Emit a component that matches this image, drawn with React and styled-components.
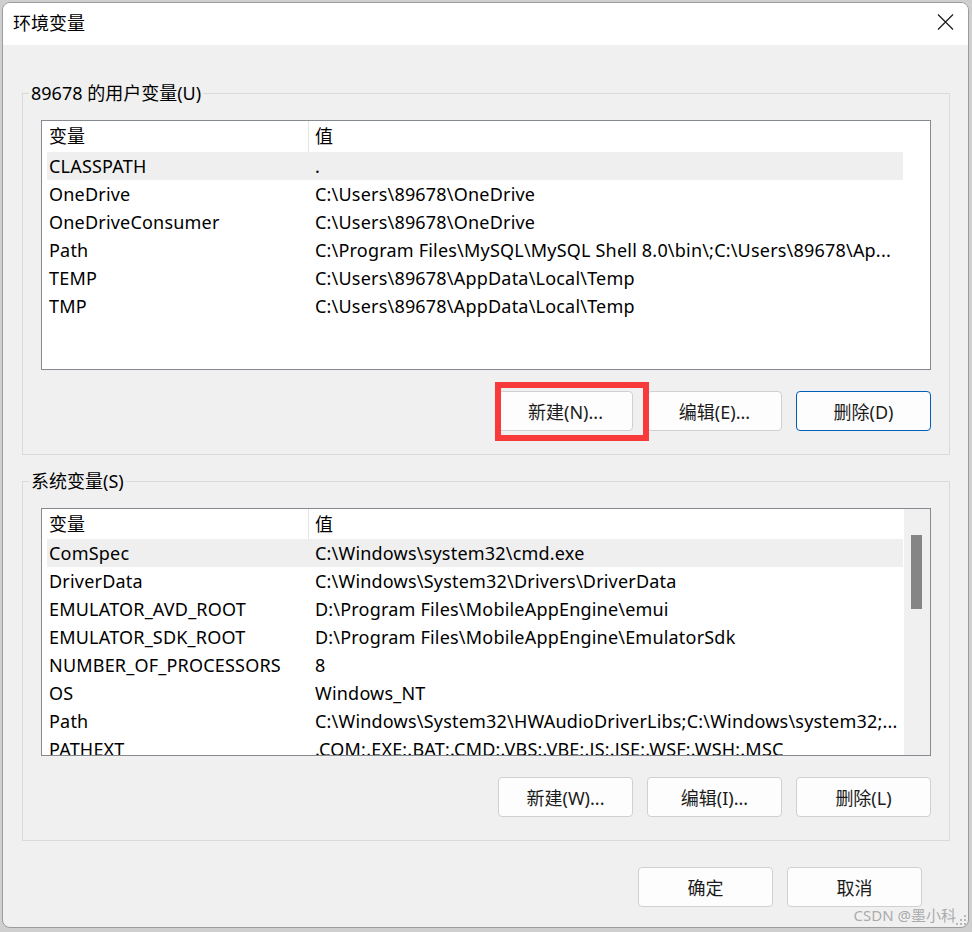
import styled, { createGlobalStyle } from "styled-components";

const GlobalStyle = createGlobalStyle`
  html, body { margin: 0; padding: 0; }
  body {
    background: #cfcfcf;
    font-family: "Noto Sans", "Noto Sans CJK SC", sans-serif;
    color: #000;
  }
`;

const userVars = [
  ["CLASSPATH", "."],
  ["OneDrive", "C:\\Users\\89678\\OneDrive"],
  ["OneDriveConsumer", "C:\\Users\\89678\\OneDrive"],
  ["Path", "C:\\Program Files\\MySQL\\MySQL Shell 8.0\\bin\\;C:\\Users\\89678\\Ap..."],
  ["TEMP", "C:\\Users\\89678\\AppData\\Local\\Temp"],
  ["TMP", "C:\\Users\\89678\\AppData\\Local\\Temp"],
];

const systemVars = [
  ["ComSpec", "C:\\Windows\\system32\\cmd.exe"],
  ["DriverData", "C:\\Windows\\System32\\Drivers\\DriverData"],
  ["EMULATOR_AVD_ROOT", "D:\\Program Files\\MobileAppEngine\\emui"],
  ["EMULATOR_SDK_ROOT", "D:\\Program Files\\MobileAppEngine\\EmulatorSdk"],
  ["NUMBER_OF_PROCESSORS", "8"],
  ["OS", "Windows_NT"],
  ["Path", "C:\\Windows\\System32\\HWAudioDriverLibs;C:\\Windows\\system32;..."],
  ["PATHEXT", ".COM;.EXE;.BAT;.CMD;.VBS;.VBE;.JS;.JSE;.WSF;.WSH;.MSC"],
];

const VarList = ({ rows, height, head, scroll }) => (
  <List $h={height}>
    <Table>
      <HeaderRow $h={head}>
        <HeadCell>变量</HeadCell>
        <HeadCell $sep>值</HeadCell>
      </HeaderRow>
      {rows.map(([name, value], i) => (
        <Row key={name + i} $selected={i === 0}>
          <Cell>{name}</Cell>
          <Cell $value>{value}</Cell>
        </Row>
      ))}
    </Table>
    <ScrollArea $visible={scroll}>
      {scroll && <Thumb />}
    </ScrollArea>
  </List>
);

const App = () => {
  return (
    <>
      <GlobalStyle />
      <Window>
        <TitleBar>
          <Title>环境变量</Title>
          <CloseIcon width="17" height="16" viewBox="0 0 17 16">
            <path d="M1 0.5 L16 15.5 M16 0.5 L1 15.5" />
          </CloseIcon>
        </TitleBar>
        <Body>
          <Group $top={38}>
            <Legend>89678 的用户变量(U)</Legend>
            <VarList rows={userVars} height={250} head={31} />
            <ButtonRow>
              <Marked>
                <Button>新建(N)...</Button>
              </Marked>
              <Button>编辑(E)...</Button>
              <Button $primary>删除(D)</Button>
            </ButtonRow>
          </Group>
          <Group $top={16}>
            <Legend>系统变量(S)</Legend>
            <VarList rows={systemVars} height={248} head={30} scroll />
            <ButtonRow>
              <Button>新建(W)...</Button>
              <Button>编辑(I)...</Button>
              <Button>删除(L)</Button>
            </ButtonRow>
          </Group>
          <Footer>
            <Button>确定</Button>
            <Button>取消</Button>
          </Footer>
        </Body>
        <Watermark>CSDN @墨小科</Watermark>
        <Grip width="12" height="12" viewBox="0 0 12 12">
          <rect x="9" y="1" width="2" height="2" />
          <rect x="5" y="5" width="2" height="2" />
          <rect x="9" y="5" width="2" height="2" />
          <rect x="1" y="9" width="2" height="2" />
          <rect x="5" y="9" width="2" height="2" />
          <rect x="9" y="9" width="2" height="2" />
        </Grip>
      </Window>
    </>
  );
};

export default App;

const Window = styled.div`
  position: relative;
  margin: 2px 3px 0 2px;
  width: 967px;
  box-sizing: border-box;
  border: 1px solid #9c9c9c;
  border-radius: 8px;
  overflow: hidden;
  background: #f0f0f0;
`;

const TitleBar = styled.div`
  height: 42px;
  box-sizing: border-box;
  background: #fff;
  display: flex;
  align-items: center;
  justify-content: space-between;
  padding: 0 14px 5px 10px;
`;

const Title = styled.div`
  font-family: "Noto Sans CJK SC", sans-serif;
  font-size: 18px;
  line-height: 24px;
`;

const CloseIcon = styled.svg`
  fill: none;
  stroke: #1a1a1a;
  stroke-width: 1.2;
`;

const Body = styled.div`
  padding: 0 18px 20px 19px;
`;

const Group = styled.fieldset`
  margin: ${(p) => p.$top}px 0 0;
  padding: 17px 18px 23px;
  border: 1px solid #dadada;
  min-width: 0;
`;

const Legend = styled.legend`
  margin-left: -12px;
  padding: 0 2px;
  font-family: "Noto Sans", "Noto Sans CJK SC", sans-serif;
  font-size: 18px;
  line-height: 20px;
`;

const List = styled.div`
  height: ${(p) => p.$h}px;
  box-sizing: border-box;
  border: 1px solid #858a90;
  background: #fff;
  display: flex;
  overflow: hidden;
`;

const Table = styled.div`
  flex: 1;
  min-width: 0;
  display: flex;
  flex-direction: column;
`;

const HeaderRow = styled.div`
  display: grid;
  grid-template-columns: 266px 1fr;
  height: ${(p) => p.$h}px;
  flex-shrink: 0;
`;

const HeadCell = styled.div`
  padding-left: ${(p) => (p.$sep ? 6 : 7)}px;
  border-left: ${(p) => (p.$sep ? "1px solid #e5e5e5" : "none")};
  font-size: 18px;
  line-height: 30px;
`;

const Row = styled.div`
  display: grid;
  grid-template-columns: 261px 1fr;
  height: 28px;
  flex-shrink: 0;
  margin-left: 5px;
  background: ${(p) => (p.$selected ? "#efefef" : "transparent")};
`;

const Cell = styled.div`
  padding-left: ${(p) => (p.$value ? 7 : 2)}px;
  font-size: 18px;
  line-height: 28px;
  letter-spacing: 0.2px;
  white-space: nowrap;
  overflow: hidden;
`;

const ScrollArea = styled.div`
  width: 26px;
  margin-left: 1px;
  flex-shrink: 0;
  background: ${(p) => (p.$visible ? "#f0f0f0" : "#fff")};
  display: flex;
  flex-direction: column;
`;

const Thumb = styled.div`
  width: 11px;
  height: 74px;
  margin: 26px 0 0 7px;
  background: #858585;
`;

const ButtonRow = styled.div`
  display: flex;
  justify-content: flex-end;
  gap: 14px;
  margin-top: 21px;
`;

const Button = styled.button`
  width: 135px;
  height: 40px;
  box-sizing: border-box;
  border: 1px solid ${(p) => (p.$primary ? "#005fb8" : "#d0d0d0")};
  border-radius: 4px;
  background: #fdfdfd;
  color: #1b1b1b;
  font-family: "Noto Sans", "Noto Sans CJK SC", sans-serif;
  font-size: 18px;
  padding: 0;
`;

const Marked = styled.div`
  position: relative;
  display: flex;

  &::after {
    content: "";
    position: absolute;
    top: -9px;
    left: -3px;
    right: -16px;
    bottom: -10px;
    border: 6px solid #f83a3a;
    pointer-events: none;
  }
`;

const Footer = styled.div`
  display: flex;
  justify-content: flex-end;
  gap: 14px;
  margin: 26px 28px 0 0;
`;

const Watermark = styled.div`
  position: absolute;
  right: 12px;
  bottom: 2px;
  font-family: "Noto Sans", "Noto Sans CJK SC", sans-serif;
  font-size: 15px;
  line-height: 20px;
  color: rgba(130, 130, 130, 0.65);
`;

const Grip = styled.svg`
  position: absolute;
  right: 1px;
  bottom: 1px;
  fill: #b8b8b8;
`;
